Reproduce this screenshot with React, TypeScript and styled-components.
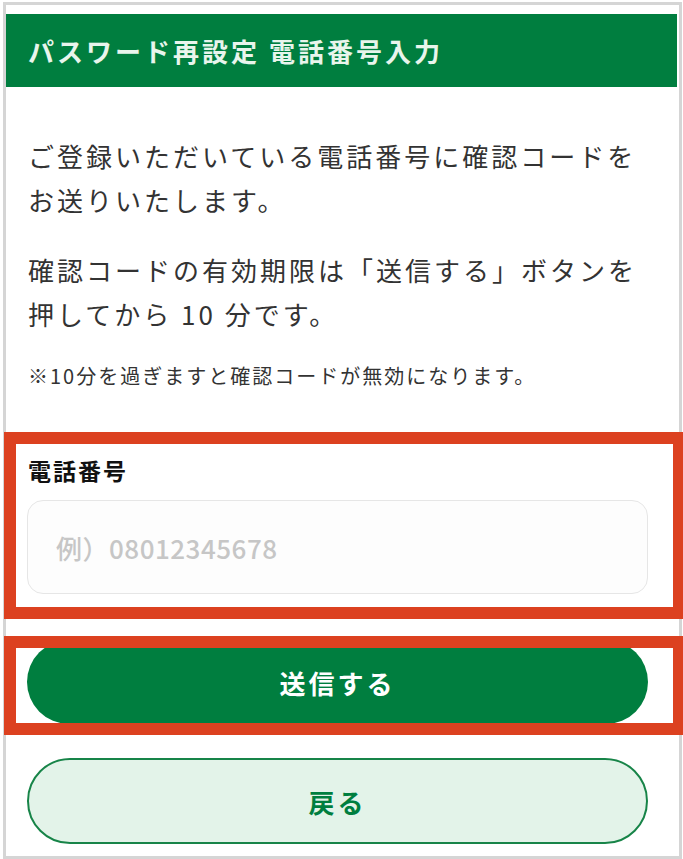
import React from "react";
import styled, { createGlobalStyle } from "styled-components";

const GlobalStyle = createGlobalStyle`
  html, body {
    margin: 0;
    padding: 0;
    background: #ffffff;
    overflow: hidden;
  }
  body {
    font-family: "Noto Sans CJK JP", "Noto Sans", sans-serif;
    color: #333333;
  }
  * {
    box-sizing: border-box;
  }
`;

const Page = styled.div`
  position: relative;
  width: 683px;
  height: 859px;
  padding: 2px 0 0 3px;
`;

const Frame = styled.div`
  width: 679px;
  height: 857px;
  border: 3px solid #d5d5d5;
  display: flex;
  flex-direction: column;
  background: #ffffff;
`;

const Header = styled.h1`
  margin: 9px 2px 0 0;
  height: 73px;
  background: #007e3f;
  color: #e8f5ec;
  display: flex;
  align-items: center;
  padding-left: 22px;
  font-size: 26px;
  font-weight: 700;
  letter-spacing: 3px;
  line-height: 1;
`;

const Body = styled.div`
  display: flex;
  flex-direction: column;
  padding: 0 31px 0 21px;
`;

const Paragraph = styled.p<{ $gap: number }>`
  margin: ${(p) => p.$gap}px 0 0 1px;
  font-size: 26px;
  line-height: 44px;
  letter-spacing: 3px;
  color: #333333;
`;

const Note = styled.p`
  margin: 23px 0 0 1px;
  font-size: 20px;
  line-height: 34px;
  letter-spacing: 2px;
  color: #333333;
`;

const Label = styled.label`
  margin: 61px 0 0 1px;
  font-size: 23px;
  line-height: 32px;
  font-weight: 700;
  letter-spacing: 2px;
  color: #111111;
`;

const PhoneInput = styled.input`
  margin-top: 14px;
  height: 94px;
  width: 100%;
  border: 1.5px solid #e6e6e6;
  border-radius: 16px;
  background: #fdfdfd;
  padding: 0 0 0 28px;
  font-family: "Noto Sans CJK JP", "Noto Sans", sans-serif;
  font-size: 26px;
  font-weight: 500;
  letter-spacing: 0.5px;
  color: #333333;
  outline: none;

  &::placeholder {
    color: #c6c6c6;
  }
`;

const PillButton = styled.button<{ $variant: "primary" | "secondary"; $gap: number }>`
  margin-top: ${(p) => p.$gap}px;
  height: ${(p) => (p.$variant === "primary" ? 84 : 86)}px;
  width: 100%;
  border-radius: 43px;
  border: ${(p) => (p.$variant === "primary" ? "none" : "2px solid #178448")};
  background: ${(p) => (p.$variant === "primary" ? "#007e3f" : "#e3f3e9")};
  color: ${(p) => (p.$variant === "primary" ? "#ffffff" : "#007e3f")};
  font-family: "Noto Sans CJK JP", "Noto Sans", sans-serif;
  font-size: 26px;
  font-weight: 700;
  letter-spacing: 3px;
  display: flex;
  align-items: center;
  justify-content: center;
  cursor: pointer;
`;

/* Red highlight frames laid over the form field and the send button */
const Highlight = styled.div<{ $top: number; $height: number }>`
  position: absolute;
  left: 4px;
  top: ${(p) => p.$top}px;
  width: 681px;
  height: ${(p) => p.$height}px;
  border: 12px solid #dc4120;
  pointer-events: none;
`;

export default function App() {
  return (
    <>
      <GlobalStyle />
      <Page>
        <Frame>
          <Header>パスワード再設定 電話番号入力</Header>
          <Body>
            <Paragraph $gap={47}>
              ご登録いただいている電話番号に確認コードをお送りいたします。
            </Paragraph>
            <Paragraph $gap={26}>
              確認コードの有効期限は「送信する」ボタンを押してから 10 分です。
            </Paragraph>
            <Note>※10分を過ぎますと確認コードが無効になります。</Note>
            <Label htmlFor="tel">電話番号</Label>
            <PhoneInput id="tel" type="tel" placeholder="例）08012345678" />
            <PillButton $variant="primary" $gap={46}>
              送信する
            </PillButton>
            <PillButton $variant="secondary" $gap={34}>
              戻る
            </PillButton>
          </Body>
        </Frame>
        <Highlight $top={432} $height={187} />
        <Highlight $top={636} $height={99} />
      </Page>
    </>
  );
}
